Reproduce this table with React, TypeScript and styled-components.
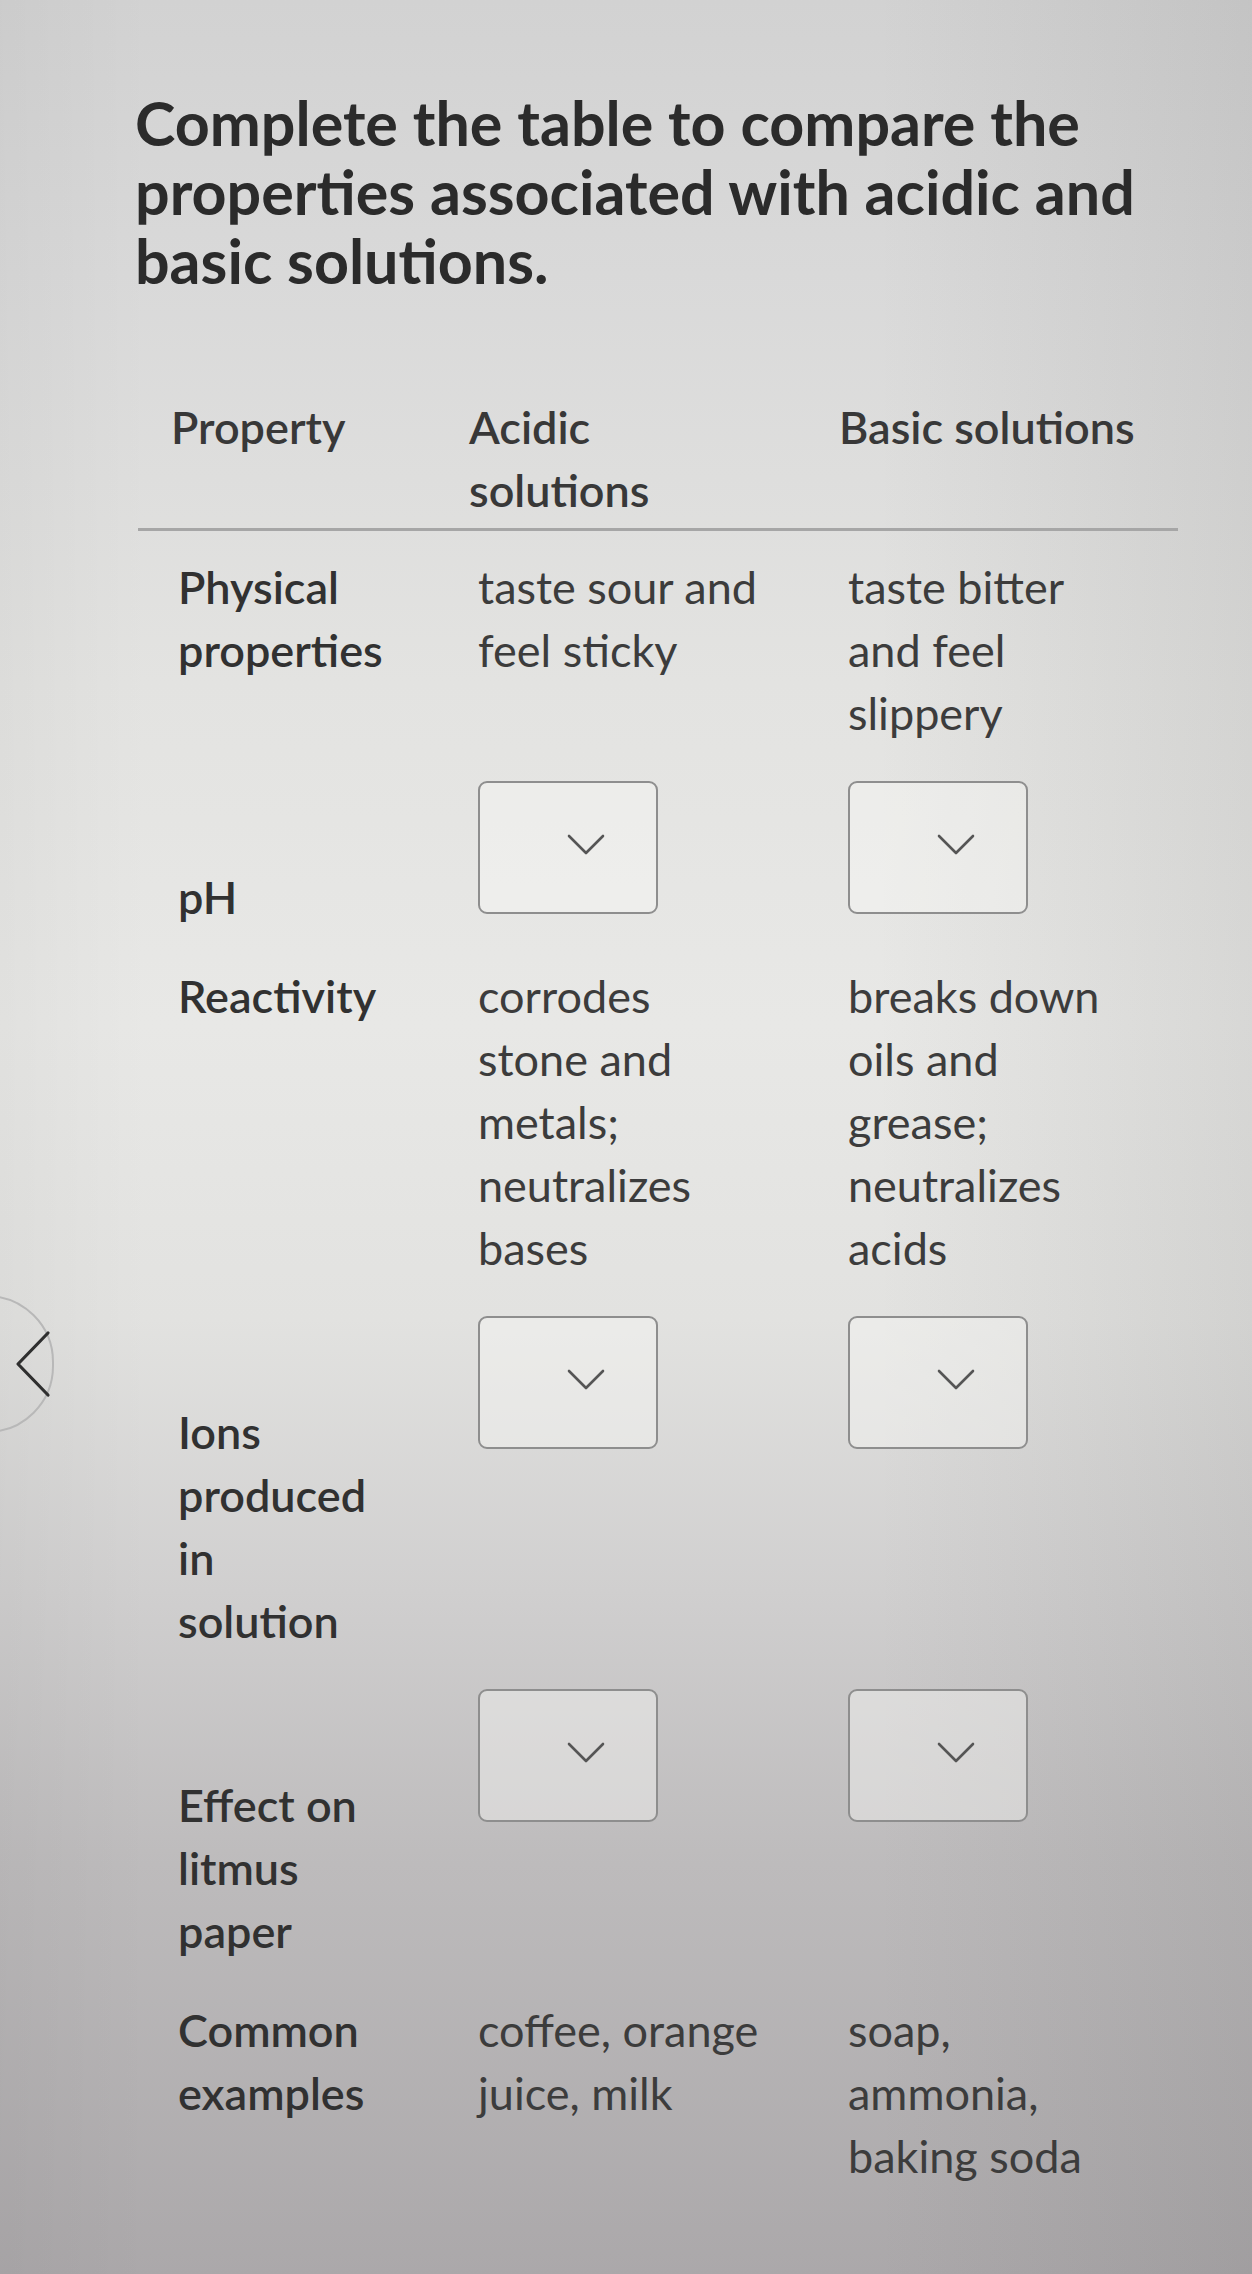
import React from "react";
import styled, { createGlobalStyle } from "styled-components";

const Global = createGlobalStyle`
  html, body { margin: 0; padding: 0; }
  body {
    width: 1252px;
    min-height: 2274px;
    font-family: Lato, "Open Sans", "Liberation Sans", sans-serif;
    color: #363636;
    background: linear-gradient(180deg, #d2d2d2 0%, #d9d9d9 12%, #e3e3e1 30%, #e8e8e6 45%, #e2e2e0 58%, #d0cfcf 70%, #bdbbbc 82%, #aba8aa 100%);
    overflow: hidden;
  }
`;

const Page = styled.div`
  position: relative;
  width: 1252px;
  height: 2274px;
  box-sizing: border-box;
  padding: 88px 0 0 135px;
  background:
    linear-gradient(90deg, rgba(0,0,0,0.03) 0%, rgba(0,0,0,0) 12%, rgba(0,0,0,0) 70%, rgba(70,70,70,0.1) 100%);
`;

const Title = styled.h1`
  margin: 0;
  font-size: 61px;
  line-height: 69px;
  font-weight: 700;
  color: #2b2b2b;
  letter-spacing: 0;
`;

const Table = styled.table`
  margin-top: 101px;
  margin-left: 3px;
  width: 1040px;
  border-collapse: collapse;
  table-layout: fixed;
  font-size: 45px;
  line-height: 63px;
`;

const Col = styled.col<{ $w: number }>`
  width: ${(p) => p.$w}px;
`;

const HeadCell = styled.th`
  text-align: left;
  vertical-align: top;
  font-weight: 600;
  color: #383838;
  white-space: nowrap;
  padding: 0 0 6px 31px;
  border-bottom: 3px solid #a6a6a6;
  &:first-child {
    padding-left: 33px;
  }
`;

const LabelCell = styled.td`
  vertical-align: baseline;
  font-weight: 600;
  color: #313131;
  white-space: nowrap;
  padding: 25px 0 11px 40px;
`;

const ValueCell = styled.td`
  vertical-align: baseline;
  font-weight: 400;
  color: #3c3c3c;
  white-space: nowrap;
  padding: 25px 0 11px 40px;
`;

const Select = styled.span`
  display: inline-block;
  position: relative;
  width: 180px;
  height: 133px;
  box-sizing: border-box;
  border: 2px solid #8e8e8e;
  border-radius: 9px;
  background: rgba(250, 250, 248, 0.4);
  vertical-align: baseline;
`;

const Chevron = styled.svg`
  position: absolute;
  left: 86px;
  top: 50px;
`;

const NavButton = styled.div`
  position: absolute;
  left: -80px;
  top: 1295px;
  width: 134px;
  height: 138px;
  box-sizing: border-box;
  border: 2.5px solid #b8b8b8;
  border-radius: 69px;
`;

const NavChevron = styled.svg`
  position: absolute;
  left: 92px;
  top: 32px;
`;

const Dropdown = () => (
  <Select>
    <Chevron width="40" height="24" viewBox="0 0 40 24">
      <path d="M3 3 L20 20 L37 3" fill="none" stroke="#555" strokeWidth="2.6" strokeLinejoin="round" strokeLinecap="round" />
    </Chevron>
  </Select>
);

const Lines = ({ lines }: { lines: string[] }) => (
  <>
    {lines.map((l, i) => (
      <React.Fragment key={i}>
        {i > 0 && <br />}
        {l}
      </React.Fragment>
    ))}
  </>
);

type RowData = {
  label: string[];
  acid?: string[];
  base?: string[];
  select?: boolean;
};

const rows: RowData[] = [
  { label: ["Physical", "properties"], acid: ["taste sour and", "feel sticky"], base: ["taste bitter", "and feel", "slippery"] },
  { label: ["pH"], select: true },
  {
    label: ["Reactivity"],
    acid: ["corrodes", "stone and", "metals;", "neutralizes", "bases"],
    base: ["breaks down", "oils and", "grease;", "neutralizes", "acids"],
  },
  { label: ["Ions", "produced", "in", "solution"], select: true },
  { label: ["Effect on", "litmus", "paper"], select: true },
  { label: ["Common", "examples"], acid: ["coffee, orange", "juice, milk"], base: ["soap,", "ammonia,", "baking soda"] },
];

export default function App() {
  return (
    <>
      <Global />
      <Page>
        <Title>
          Complete the table to compare the
          <br />
          properties associated with acidic and
          <br />
          basic solutions.
        </Title>
        <Table>
          <colgroup>
            <Col $w={300} />
            <Col $w={370} />
            <Col $w={370} />
          </colgroup>
          <thead>
            <tr>
              <HeadCell>Property</HeadCell>
              <HeadCell>
                <Lines lines={["Acidic", "solutions"]} />
              </HeadCell>
              <HeadCell>Basic solutions</HeadCell>
            </tr>
          </thead>
          <tbody>
            {rows.map((r) => (
              <tr key={r.label.join(" ")}>
                <LabelCell>
                  <Lines lines={r.label} />
                </LabelCell>
                <ValueCell>{r.select ? <Dropdown /> : <Lines lines={r.acid ?? []} />}</ValueCell>
                <ValueCell>{r.select ? <Dropdown /> : <Lines lines={r.base ?? []} />}</ValueCell>
              </tr>
            ))}
          </tbody>
        </Table>
        <NavButton>
          <NavChevron width="38" height="70" viewBox="0 0 38 70">
            <path d="M34 4 L4 35 L34 66" fill="none" stroke="#2f2f2f" strokeWidth="3.2" strokeLinecap="round" strokeLinejoin="round" />
          </NavChevron>
        </NavButton>
      </Page>
    </>
  );
}
